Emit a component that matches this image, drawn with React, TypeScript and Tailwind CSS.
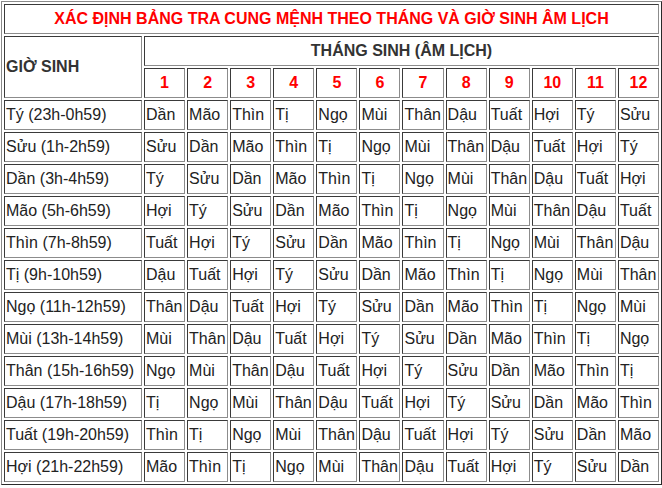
const BRANCHES = ['Tý', 'Sửu', 'Dần', 'Mão', 'Thìn', 'Tị', 'Ngọ', 'Mùi', 'Thân', 'Dậu', 'Tuất', 'Hợi'];

const HOURS = [
  'Tý (23h-0h59)',
  'Sửu (1h-2h59)',
  'Dần (3h-4h59)',
  'Mão (5h-6h59)',
  'Thìn (7h-8h59)',
  'Tị (9h-10h59)',
  'Ngọ (11h-12h59)',
  'Mùi (13h-14h59)',
  'Thân (15h-16h59)',
  'Dậu (17h-18h59)',
  'Tuất (19h-20h59)',
  'Hợi (21h-22h59)',
];

const MONTHS = Array.from({ length: 12 }, (_, i) => i + 1);

const cell =
  'flex items-center border border-t-[#3a3a3a] border-l-[#3a3a3a] border-r-[#8c8c8c] border-b-[#8c8c8c] overflow-hidden whitespace-nowrap';

export default function App() {
  return (
    <div className="min-h-screen bg-white pl-px pt-px font-['Liberation_Sans',Arial,sans-serif] text-[16px] leading-[18px] text-[#222]">
      <div className="grid w-[661px] grid-cols-[138px_repeat(12,minmax(0,1fr))] auto-rows-[30px] gap-[2px] border border-t-[#8a8a8a] border-l-[#8a8a8a] border-r-[#2a2a2a] border-b-[#2a2a2a] p-[2px]">
        <div className={`${cell} col-span-13 justify-center font-bold text-[#ff0000]`}>
          XÁC ĐỊNH BẢNG TRA CUNG MỆNH THEO THÁNG VÀ GIỜ SINH ÂM LỊCH
        </div>

        <div className={`${cell} row-span-2 pl-px font-bold text-[#333]`}>GIỜ SINH</div>
        <div className={`${cell} col-span-12 justify-center font-bold text-[#333]`}>
          THÁNG SINH (ÂM LỊCH)
        </div>
        {MONTHS.map((month) => (
          <div key={month} className={`${cell} justify-center font-bold text-[#ff0000]`}>
            {month}
          </div>
        ))}

        {HOURS.map((hour, row) => (
          <div key={hour} className="contents">
            <div className={`${cell} pl-px`}>{hour}</div>
            {MONTHS.map((_, col) => (
              <div key={col} className={`${cell} pl-px`}>
                {BRANCHES[(((2 - row + col) % 12) + 12) % 12]}
              </div>
            ))}
          </div>
        ))}
      </div>
    </div>
  );
}
